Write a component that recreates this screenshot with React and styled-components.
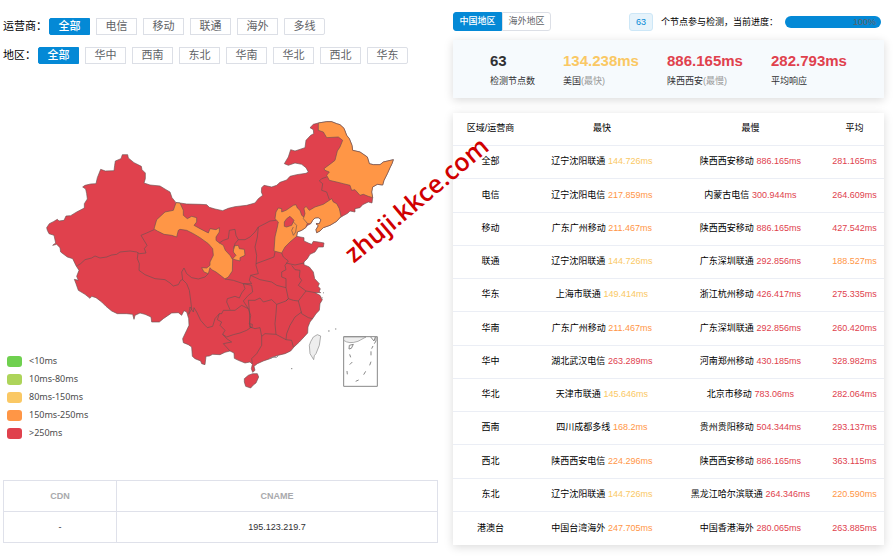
import React from "react";
import styled, { createGlobalStyle } from "styled-components";

const sans = `"Liberation Sans", "Noto Sans CJK SC", sans-serif`;

const color = {
  blue: "#0489d6",
  yellow: "#fac864",
  orange: "#ff9646",
  red: "#e0414d",
  border: "#dcdfe6",
  line: "#ebeef5",
};

const GlobalStyle = createGlobalStyle`
  * { box-sizing: border-box; }
  body { margin: 0; background: #fff; color: #000; font: 9px/12px ${sans}; }
  button { font-family: inherit; cursor: pointer; }
`;

const Page = styled.main`
  position: relative;
  display: grid;
  grid-template-columns: 435fr 431fr;
  align-items: start;
  gap: 15px;
  padding: 12px 9px 11px 3px;
  overflow: hidden;
`;

const Left = styled.section`
  min-width: 0;
  padding-top: 6px;
`;

const Right = styled.section`
  min-width: 0;
`;

const FilterRow = styled.div`
  display: flex;
  align-items: center;
  gap: 6px;
  margin-bottom: 12px;
`;

const FilterLabel = styled.span`
  font-size: 11px;
  line-height: 17px;
  margin-right: -4px;
  white-space: nowrap;
`;

const FilterButton = styled.button`
  width: 41px;
  height: 17px;
  padding: 0;
  border: 1px solid ${(p) => (p.$active ? color.blue : color.border)};
  border-radius: ${(p) => (p.$active ? "2px 0 0 2px" : "0")};
  background: ${(p) => (p.$active ? color.blue : "#fff")};
  color: ${(p) => (p.$active ? "#fff" : "#606266")};
  font-size: 11px;
  font-weight: ${(p) => (p.$active ? 500 : 400)};
  line-height: 15px;
  &:last-child { border-radius: 0 2px 2px 0; }
`;

const MapArea = styled.figure`
  display: grid;
  margin: 0 0 36px;
`;

const MapSvg = styled.svg`
  grid-area: 1 / 1;
  display: block;
  width: 100%;
  height: auto;
`;

const Legend = styled.ul`
  grid-area: 1 / 1;
  align-self: end;
  justify-self: start;
  margin: 0;
  padding: 0 0 2px 4px;
  list-style: none;
`;

const LegendItem = styled.li`
  display: flex;
  align-items: center;
  gap: 7px;
  height: 18px;
  color: #4c4c4c;
  font-family: "Noto Sans", sans-serif;
`;

const Swatch = styled.span`
  width: 15px;
  height: 11px;
  border-radius: 3px;
  background: ${(p) => p.$color};
`;

const CdnTable = styled.table`
  width: 100%;
  table-layout: fixed;
  border-collapse: collapse;
  text-align: center;
  color: #303133;
  th, td { height: 31px; padding: 0; border: 1px solid #dfe1ea; }
  th { color: #a8a9ac; font-weight: 700; }
  th:first-child { width: 26%; }
`;

const TopBar = styled.div`
  display: flex;
  align-items: center;
  height: 19px;
  padding-right: 3px;
`;

const Segment = styled.button`
  width: 49px;
  height: 19px;
  padding: 0;
  border: 1px solid ${(p) => (p.$active ? color.blue : color.border)};
  border-radius: ${(p) => (p.$active ? "3px 0 0 3px" : "0 3px 3px 0")};
  background: ${(p) => (p.$active ? color.blue : "#fff")};
  color: ${(p) => (p.$active ? "#fff" : "#606266")};
  font-size: 9px;
  font-weight: ${(p) => (p.$active ? 500 : 400)};
  line-height: 17px;
`;

const Count = styled.span`
  width: 24px;
  margin-left: auto;
  border: 1px solid #cde7f7;
  border-radius: 3px;
  background: #e6f3fb;
  color: ${color.blue};
  line-height: 16px;
  text-align: center;
`;

const ProgressLabel = styled.span`
  margin: 0 7px 0 8px;
  white-space: nowrap;
`;

const Progress = styled.div`
  width: 96px;
  height: 12px;
  padding-right: 5px;
  border-radius: 6px;
  background: ${color.blue};
  color: #606266;
  text-align: right;
`;

const Summary = styled.dl`
  display: grid;
  grid-template-columns: 73fr 104fr 104fr 113fr;
  margin: 9px 0 15px;
  padding: 12px 0 10px 37px;
  background: #f6fafd;
  box-shadow: 0 2px 9px rgba(0, 0, 0, 0.15);
`;

const Stat = styled.div`
  display: flex;
  flex-direction: column-reverse;
  gap: 4px;
  dt { line-height: 14px; color: #303133; }
  dt span { color: #999; }
  dd { margin: 0; font-size: 15px; font-weight: 700; line-height: 18px; color: ${(p) => p.$color}; }
`;

const Results = styled.table`
  width: 100%;
  table-layout: fixed;
  border-collapse: separate;
  border-spacing: 0;
  text-align: center;
  white-space: nowrap;
  box-shadow: 0 2px 9px rgba(0, 0, 0, 0.15);
  th, td { height: 33px; padding: 0 0 2px; border-bottom: 1px solid ${color.line}; font-weight: 400; }
  tbody tr:nth-child(4n + 2) > * { height: 34px; }
  tbody tr:last-child > * { border-bottom: 0; }
  thead th:nth-child(1) { width: 17.4%; }
  thead th:nth-child(2) { width: 34.3%; }
  thead th:nth-child(4) { width: 13.7%; }
`;

const Ms = styled.span`
  color: ${(p) => (p.$value < 150 ? color.yellow : p.$value < 250 ? color.orange : color.red)};
`;

const Watermark = styled.span`
  position: absolute;
  left: 359px;
  top: 234px;
  color: #d00000;
  font: 600 25px/36px "Open Sans", "Noto Sans", sans-serif;
  white-space: nowrap;
  transform: rotate(-40deg);
  transform-origin: 0 100%;
  pointer-events: none;
`;

const carriers = ["全部", "电信", "移动", "联通", "海外", "多线"];
const areas = ["全部", "华中", "西南", "东北", "华南", "华北", "西北", "华东"];

const legend = [
  ["#6fd04f", "<10ms"],
  ["#add45a", "10ms-80ms"],
  [color.yellow, "80ms-150ms"],
  [color.orange, "150ms-250ms"],
  [color.red, ">250ms"],
];

const results = [
  ["全部", "辽宁沈阳联通", "144.726", "陕西西安移动", "886.165", "281.165"],
  ["电信", "辽宁沈阳电信", "217.859", "内蒙古电信", "300.944", "264.609"],
  ["移动", "广东广州移动", "211.467", "陕西西安移动", "886.165", "427.542"],
  ["联通", "辽宁沈阳联通", "144.726", "广东深圳联通", "292.856", "188.527"],
  ["华东", "上海市联通", "149.414", "浙江杭州移动", "426.417", "275.335"],
  ["华南", "广东广州移动", "211.467", "广东深圳联通", "292.856", "260.420"],
  ["华中", "湖北武汉电信", "263.289", "河南郑州移动", "430.185", "328.982"],
  ["华北", "天津市联通", "145.646", "北京市移动", "783.06", "282.064"],
  ["西南", "四川成都多线", "168.2", "贵州贵阳移动", "504.344", "293.137"],
  ["西北", "陕西西安电信", "224.296", "陕西西安移动", "886.165", "363.115"],
  ["东北", "辽宁沈阳联通", "144.726", "黑龙江哈尔滨联通", "264.346", "220.590"],
  ["港澳台", "中国台湾海外", "247.705", "中国香港海外", "280.065", "263.885"],
];

const outline =
  "-400,352 -392,340 -380,334 -368,327 -363,332 -348,330 -342,317 -328,316 -310,305 -287,293 -287,280 -278,266 -280,250 -283,236 -292,230 -285,225 -268,221 -252,220 -248,202 -238,177 -224,182 -198,181 -196,165 -194,152 -177,145 -173,133 -157,133 -155,143 -138,157 -116,168 -114,178 -104,188 -104,205 -108,218 -90,224 -60,227 -42,238 -30,245 -24,262 -12,277 " +
  "0,278 20,281 60,282 80,283 88,291 105,296 128,301 145,294 165,289 200,285 225,278 235,265 248,255 244,245 245,232 252,225 275,230 290,225 300,216 320,209 330,198 350,193 378,189 385,185 378,172 365,162 345,158 325,165 313,160 325,140 332,118 345,122 375,112 378,90 392,75 401,70 400,58 390,52 400,42 415,38 440,34 455,34 470,40 480,43 492,54 500,75 508,85 516,105 518,120 540,125 562,140 568,160 580,163 600,163 610,155 640,148 636,160 630,172 622,190 612,210 608,224 592,222 578,230 575,245 578,262 576,278 565,275 548,283 540,292 525,295 525,305 510,302 503,309 490,316 480,322 470,333 450,345 430,352 420,362 410,367 408,358 415,346 408,340 418,340 423,328 415,322 405,323 398,330 392,340 383,345 377,352 365,360 352,365 350,378 372,382 372,392 385,398 395,402 400,393 415,395 432,398 " +
  "430,410 415,410 405,425 390,432 382,445 372,455 372,463 388,470 400,485 404,505 418,520 414,528 421,535 418,543 422,547 405,547 420,555 427,568 420,580 418,600 408,610 400,622 390,635 384,650 383,668 372,680 358,695 342,710 332,722 315,730 290,736 270,745 250,752 232,760 222,768 225,780 218,786 214,775 217,762 210,755 195,758 175,750 163,744 162,728 150,722 135,726 120,733 98,732 88,737 78,738 75,763 65,760 62,752 45,745 37,738 35,710 25,703 10,697 8,685 20,660 27,645 26,625 20,605 12,601 " +
  "5,615 -5,607 -25,608 -50,625 -62,635 -85,635 -87,620 -105,612 -120,608 -135,615 -138,627 -142,612 -160,610 -188,610 -205,602 -222,588 -235,575 -252,562 -265,558 -270,564 -285,552 -305,540 -312,520 -317,507 -305,510 -310,498 -303,480 -312,466 -322,445 -338,440 -358,425 -360,412 -370,402 -382,405 -373,398 -378,375 -393,370 -398,360";

const orangeProvinces = [
  "-12,277 0,278 10,300 10,315 22,325 35,318 50,322 50,335 42,345 60,355 85,368 90,355 108,358 118,352 118,365 108,380 108,390 118,398 130,405 136,420 150,435 158,448 157,482 145,500 135,506 125,498 108,485 95,478 90,472 85,490 72,485 65,472 80,473 90,465 90,455 100,435 98,415 85,400 60,382 40,370 20,360 0,357 -5,360 -10,380 -25,375 -48,372 -68,362 -78,356 -70,328 -45,305 -20,300",
  "162,407 175,405 178,415 193,417 195,435 180,442 180,452 165,448 158,445 168,435 160,425",
  "288,305 295,293 305,295 305,305 318,300 340,285 348,283 352,293 360,300 365,315 378,325 382,340 377,352 365,360 352,365 350,378 330,395 315,410 305,428 282,422 285,380 292,350 295,335 285,325",
  "378,288 388,300 405,290 430,282 445,272 455,265 460,275 470,280 478,295 483,318 470,333 450,345 430,352 420,362 410,367 408,358 415,346 408,340 418,340 423,328 415,322 405,323 398,330 392,340 383,340 370,325 375,310 372,295",
  "415,38 440,34 455,34 470,40 480,43 492,54 500,75 508,85 516,105 518,120 540,125 562,140 568,160 580,163 600,163 610,155 640,148 636,160 630,172 622,190 612,210 608,224 592,222 578,230 575,245 578,262 565,258 550,252 540,255 525,238 515,240 510,225 490,220 470,215 448,210 440,195 448,185 435,180 432,175 455,158 465,150 472,122 480,110 488,90 475,80 440,82 430,65 415,60",
];

const northBorders = [
  "-308,466 -298,460 -285,448 -265,443 -255,437 -240,443 -220,440 -205,434 -190,432 -180,425 -150,422 -130,425 -122,430 -102,428 -107,415 -99,405 -108,390 -117,375 -100,368 -78,358",
  "-126,428 -128,445 -122,460 -123,480 -105,493 -75,505 -45,508 -30,518 -20,527 -5,523 2,510 8,508 5,485 12,473 20,490 35,502 55,506 75,500 85,490",
  "8,508 20,520 28,540 32,570 35,595 26,612 30,590 40,605 42,592 50,605 62,630 75,645 82,652 98,648 105,625 118,610",
  "118,398 130,390 145,385 148,360 165,357 168,375 175,388 165,400 162,415",
  "175,388 195,388 210,380 225,365 235,350 255,340 270,332 288,330",
  "235,350 232,380 225,410 230,435 228,465 235,490",
  "440,200 425,205 418,212 428,220 425,240 440,245 448,268",
  "340,335 350,345 347,365 340,375 335,360 340,350",
];

const southBorders = [
  "118,250 112,268 125,275 120,285 135,300 128,312 140,320 160,313 180,308 200,300 212,292 208,280 212,255 205,235 185,225 165,240 150,240 130,240 125,250 118,250",
  "150,238 140,215 142,205 165,198 178,203 185,188 195,175 190,160 215,165 218,185 205,195 190,212 205,235",
  "135,146 160,150 190,160 215,160 208,150 212,135 235,130",
  "212,135 240,148 275,155 290,165 318,172",
  "228,100 255,90 282,80 285,65",
  "305,68 310,80 325,92 315,105 318,118 305,125 305,140 318,145 318,172 325,205 318,212",
  "318,98 345,104 372,98",
  "335,105 345,118 360,120 358,140 365,150 355,165 378,182 395,185 405,187",
  "325,205 340,210 355,212 368,195 378,182",
  "355,212 360,230 365,250 385,262 398,265",
  "365,245 345,260 330,285 320,310 318,328",
  "205,210 225,210 240,203 250,215 275,208 290,222 318,212 325,205",
  "290,222 288,250 285,280 288,312 318,328 335,330 340,350",
  "205,210 208,240 210,290 225,295 240,292 245,318 255,310 288,312",
  "245,318 245,345 230,370 215,385 217,400",
  "128,312 140,325 155,335 130,340 150,362",
  "208,280 217,282 216,292 208,290",
];

function ChinaMap() {
  return (
    <MapSvg viewBox="-531 -103 1305 1105" role="img" aria-label="中国地区">
      <g stroke="#6b5252" strokeOpacity="0.8" strokeWidth="2.4" strokeLinejoin="round" fill="none">
        <polygon points={outline} fill={color.red} />
        {orangeProvinces.map((p) => (
          <polygon key={p} points={p} fill={color.orange} />
        ))}
        <polygon points="313,335 320,325 330,318 342,330 335,345 320,350 313,348" fill={color.red} />
        {northBorders.map((p) => (
          <polyline key={p} points={p} />
        ))}
        <g transform="translate(0 360)">
          {southBorders.map((p) => (
            <polyline key={p} points={p} />
          ))}
          <polygon points="193,445 205,435 218,430 232,430 236,440 228,458 220,464 212,473 197,468 193,455" fill={color.red} />
        </g>
      </g>
      <g transform="translate(0 360)" stroke="#888" strokeWidth="2" fill="none">
        <polygon points="388,345 392,334 400,320 412,313 422,317 418,345 408,370 403,376 401,388 390,370" fill="#eee" />
        <path d="M491 319h101v149h-101z" strokeWidth="3" />
        <path d="M491 320v10q16 12 43 3l24-13z" fill="#eee" />
        <path d="M572 320l10 12 4-12M588 320v12l-5 8M508 345l12-3-6 12-7 2zM509 372l3 9M517 395l-8 8M501 422l1 10M527 453l9-4M551 433l6-10M569 405l4-11M573 375v-12M575 355l4-8" strokeWidth="3" />
        <path d="M444 302h5M465 296h4M333 415h4M424 205l4-3M429 188l3-1M268 385l12-5 9 1 6-5" strokeWidth="3" />
      </g>
    </MapSvg>
  );
}

function Filter({ label, options }) {
  return (
    <FilterRow role="group" aria-label={label}>
      <FilterLabel>{label}：</FilterLabel>
      {options.map((o, i) => (
        <FilterButton key={o} type="button" $active={i === 0} aria-pressed={i === 0}>
          {o}
        </FilterButton>
      ))}
    </FilterRow>
  );
}

export default function App() {
  return (
    <>
      <GlobalStyle />
      <Page>
        <Left>
          <Filter label="运营商" options={carriers} />
          <Filter label="地区" options={areas} />
          <MapArea>
            <ChinaMap />
            <Legend>
              {legend.map(([c, text]) => (
                <LegendItem key={text}>
                  <Swatch $color={c} />
                  {text}
                </LegendItem>
              ))}
            </Legend>
          </MapArea>
          <CdnTable>
            <thead>
              <tr>
                <th scope="col">CDN</th>
                <th scope="col">CNAME</th>
              </tr>
            </thead>
            <tbody>
              <tr>
                <td>-</td>
                <td>195.123.219.7</td>
              </tr>
            </tbody>
          </CdnTable>
        </Left>
        <Right>
          <TopBar>
            <Segment type="button" $active aria-pressed="true">中国地区</Segment>
            <Segment type="button" aria-pressed="false">海外地区</Segment>
            <Count>63</Count>
            <ProgressLabel id="progress">个节点参与检测，当前进度：</ProgressLabel>
            <Progress role="progressbar" aria-labelledby="progress" aria-valuenow={100}>100%</Progress>
          </TopBar>
          <Summary>
            <Stat $color="#303133"><dt>检测节点数</dt><dd>63</dd></Stat>
            <Stat $color={color.yellow}><dt>美国<span>(最快)</span></dt><dd>134.238ms</dd></Stat>
            <Stat $color={color.red}><dt>陕西西安<span>(最慢)</span></dt><dd>886.165ms</dd></Stat>
            <Stat $color={color.red}><dt>平均响应</dt><dd>282.793ms</dd></Stat>
          </Summary>
          <Results>
            <thead>
              <tr>
                <th scope="col">区域/运营商</th>
                <th scope="col">最快</th>
                <th scope="col">最慢</th>
                <th scope="col">平均</th>
              </tr>
            </thead>
            <tbody>
              {results.map(([name, fast, fastMs, slow, slowMs, avg]) => (
                <tr key={name}>
                  <th scope="row">{name}</th>
                  <td>{fast} <Ms $value={Number(fastMs)}>{fastMs}ms</Ms></td>
                  <td>{slow} <Ms $value={Number(slowMs)}>{slowMs}ms</Ms></td>
                  <td><Ms $value={Number(avg)}>{avg}ms</Ms></td>
                </tr>
              ))}
            </tbody>
          </Results>
        </Right>
        <Watermark>zhuji.kkce.com</Watermark>
      </Page>
    </>
  );
}
